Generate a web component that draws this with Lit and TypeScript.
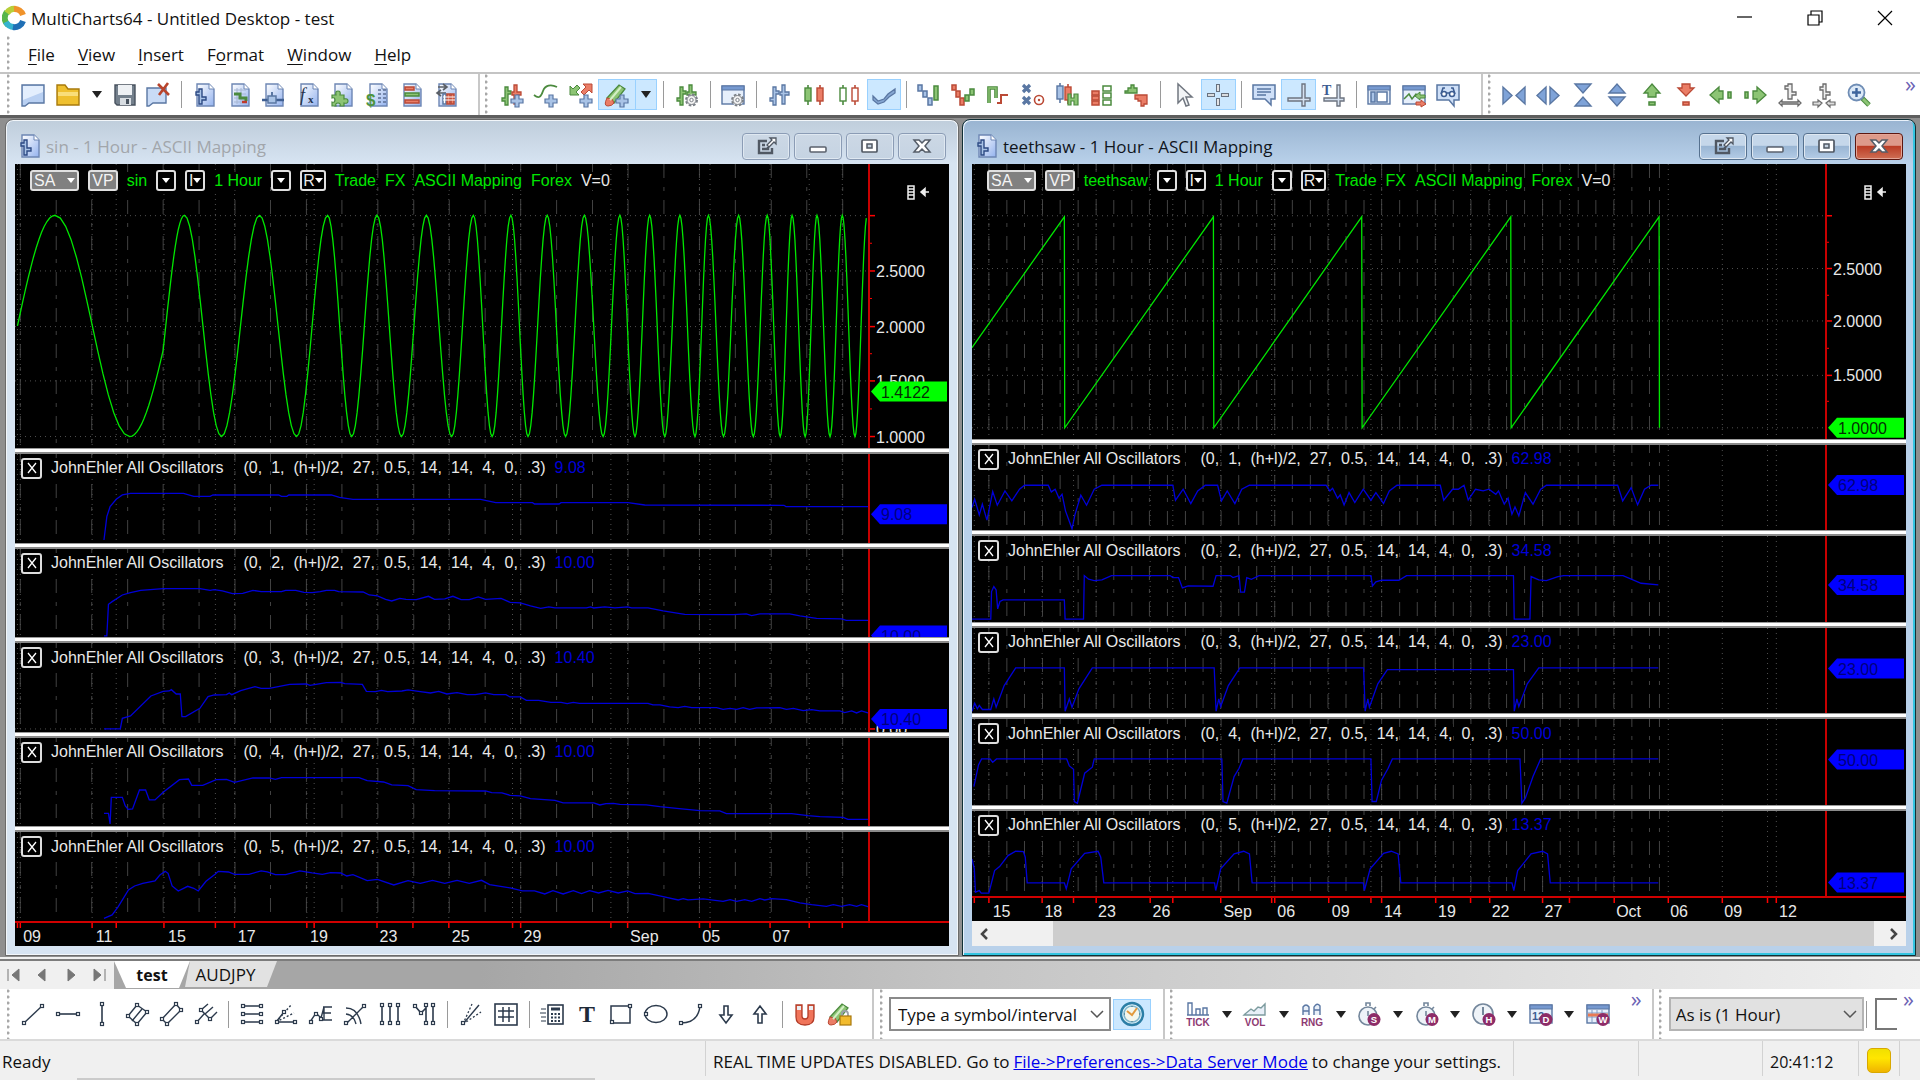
import { LitElement, html, svg, css, TemplateResult } from "lit";
import { customElement, property } from "lit/decorators.js";

type Glyph = TemplateResult;

/* ---------- icon drawing ---------- */
const BL = "#5a77a3", BF = "#a9c3e6", GR = "#4b8a3e", GF = "#8cc474", RD = "#bb4a36", RF = "#ea7d66", GY = "#6d7480", DK = "#2c3a4c";

const doc = (inner: unknown) => svg`
  <defs><linearGradient id="pg" x2="1" y2="1"><stop offset="0" stop-color="#fff"/><stop offset="1" stop-color="#93b2ee"/></linearGradient></defs>
  <path d="M4 1h12l5 5v17H4z" fill="url(#pg)" stroke="#6d86b4" stroke-width="1.4"/><path d="M16 1v5h5" fill="#fff" stroke="#6d86b4"/>${inner}`;
const plus = svg`<path d="M15 12h4v4h4v4h-4v4h-4v-4h-4v-4h4z" fill="${BF}" stroke="${BL}" stroke-width="1.2"/>`;
const gear = svg`<circle cx="16.500" cy="17" r="5.500" fill="#fff" stroke="#7b8087" stroke-width="2" stroke-dasharray="2.600 1.700"/><circle cx="16.500" cy="17" r="4.500" fill="#f2f2f2" stroke="#7b8087"/><circle cx="16.500" cy="17" r="1.700" fill="#fff" stroke="#7b8087"/>`;
const bars = (a: string, af: string, b: string, bf: string) => svg`
  <path d="M5 4h3v4h3v3H8v11H5v-4H2v-3h3z" fill="${af}" stroke="${a}" stroke-width="1.300"/>
  <path d="M14 2h3v7h4v3h-4v9h-3v-9h-2V9h2z" fill="${bf}" stroke="${b}" stroke-width="1.300"/>`;
const win = (inner: unknown) => svg`<rect x="1" y="3" width="22" height="18" fill="#e6effb" stroke="${BL}" stroke-width="1.400"/><rect x="1" y="3" width="22" height="4" fill="#7699d0" stroke="${BL}"/>${inner}`;
const candle = (x: number, c: string, f: string, y = 0) => svg`<path d="M${x} ${2 + y}v20" stroke="${c}" stroke-width="1.600"/><rect x="${x - 3}" y="${5 + y}" width="6" height="13" fill="${f}" stroke="${c}" stroke-width="1.400"/>`;
const box = (x: number, y: number, w: number, h: number, c: string, f = "#fff") => svg`<rect x="${x}" y="${y}" width="${w}" height="${h}" fill="${f}" stroke="${c}" stroke-width="1.500"/>`;
const node = (...p: number[][]) => p.map(([x, y]) => svg`<rect x="${x - 1.5}" y="${y - 1.5}" width="3" height="3" fill="#fff" stroke="${DK}" stroke-width="1.200"/>`);
const line = (d: string, w = 1.4, dash = "") => svg`<path d="${d}" fill="none" stroke="${DK}" stroke-width="${w}" stroke-dasharray="${dash}"/>`;
const badge = (t: string) => svg`<circle cx="17" cy="17.500" r="6.500" fill="#8d2c68"/><text x="17" y="21" text-anchor="middle" font-size="9.500" font-weight="700" fill="#fff" font-family="Liberation Sans, sans-serif">${t}</text>`;
const word = (t: string) => svg`<text x="12" y="24" text-anchor="middle" font-size="10" font-weight="700" fill="#8d3a72" font-family="Liberation Sans, sans-serif">${t}</text>`;
const watch = svg`<circle cx="11" cy="14" r="9" fill="#eef3f8" stroke="#74879c" stroke-width="1.600"/><path d="M9 4V1h4v3M17 7l2-2M11 9v5" fill="none" stroke="#74879c" stroke-width="1.600"/>`;
const pen = svg`<path d="M2 15 14 2l6 4L9 20z" fill="${GF}" stroke="${GR}" stroke-width="1.300"/><path d="M2 15q-4 8 1 8 4 0 6-3l-2-4z" fill="${RF}" stroke="${RD}"/><path d="M5 17 16 4" stroke="#d3efc5" stroke-width="2"/>`;

const icons: Record<string, Glyph> = {
  fresh: svg`<path d="M1 2h22v18H8l-4 3H1z" fill="#b9d0f2" stroke="${BL}" stroke-width="1.400"/><path d="M2 3h20v6L2 17z" fill="#eef5ff" opacity=".8"/>`,
  folder: svg`<path d="M1 2h8l3 4h11v16H1z" fill="#efc02f" stroke="#a87a0c" stroke-width="1.400"/><path d="M2 9h20v4H2z" fill="#f9de7a"/>`,
  save: svg`<path d="M2 2h20v20H4l-2-2z" fill="#74808c" stroke="#48525e" stroke-width="1.400"/><rect x="5" y="2" width="14" height="10" fill="#eef1f4"/><rect x="7" y="15" width="11" height="7" fill="#d8dde2"/><rect x="13" y="16" width="3" height="5" fill="#48525e"/>`,
  remove: svg`<path d="M1 5h19v15H7l-4 3H1z" fill="#c9dbf6" stroke="${BL}" stroke-width="1.400"/><path d="m12 1 11 11M22 0 13 12" stroke="#b8442c" stroke-width="2.600"/>`,
  docBars: doc(svg`<path d="M3 9h3V6h3v8h4v3H9v4H6v-9H3z" fill="${BF}" stroke="#2d4a84" stroke-width="1.400"/>`),
  docMap: doc(svg`<path d="M6 7h12M6 11h12M6 15h12M6 19h12M9 5v16M13 5v16" stroke="#a6b6d3"/><path d="M6 11h6v4h6v3" fill="none" stroke="${GR}" stroke-width="3"/><path d="M14 19h5" stroke="#c0392b" stroke-width="2.500"/>`),
  docLine: doc(svg`<path d="M0 17h22" stroke="#3f5f92" stroke-width="2.500"/>${box(6, 13, 8, 7, BL, BF)}<path d="M10 9v4" stroke="${BL}" stroke-width="2"/>`),
  docFx: doc(svg`<text x="3" y="18" font-size="18" font-style="italic" fill="#26344d" font-family="Liberation Serif, serif">f</text><text x="11" y="20" font-size="11" font-weight="700" fill="#26344d" font-family="Liberation Serif, serif">x</text>`),
  docPuzzle: doc(svg`<path d="M1 12h4q-1-4 2-4t2 4h4v4q4-1 4 2t-4 2v3H9q1-3-2-3t-2 3H1v-4q3 1 3-2T1 15z" fill="${GF}" stroke="${GR}" stroke-width="1.200"/>`),
  docMoney: doc(svg`<path d="M12 7h3M17 7h3M12 11h3M17 11h3M12 15h3M17 15h3M12 19h3M17 19h3" stroke="#5c6f94" stroke-width="1.600"/><text x="0" y="23" font-size="17" font-weight="700" fill="#4d9440" font-family="Liberation Sans, sans-serif">$</text>`),
  docRows: doc(svg`${box(5, 4, 9, 3, RD, RF)}${box(5, 10, 14, 3, GR, GF)}${box(5, 17, 14, 3, RD, RF)}`),
  docTable: doc(svg`<path d="M3 4h8M8 1l4 3-4 3M11 10H3M6 7l-4 3 4 3" fill="none" stroke="#5a5f66" stroke-width="1.600"/>${box(8, 11, 3, 10, BL)}${box(12, 11, 3, 10, RD, RF)}${box(16, 11, 3, 10, RD, RF)}<path d="M8 14h12M8 17h12" stroke="#fff"/>`),
  barsAdd: svg`${bars(GR, GF, RD, RF)}${plus}`,
  waveAdd: svg`<path d="M0 12c5 4 7 2 9-4s8-7 14-4" fill="none" stroke="${GR}" stroke-width="1.800"/>${plus}`,
  arrowsAdd: svg`<path d="M1 12h9l-3-3 4-4-3-3-4 4-3-3z" fill="${GF}" stroke="${GR}"/><path d="M23 1h-9l3 3-5 5 3 3 5-5 3 3z" fill="${RF}" stroke="${RD}"/>${plus}`,
  penAdd: svg`${pen}${plus}`,
  barsGear: svg`${bars(GR, GF, GR, GF)}${gear}`,
  winGear: svg`${win("")}${gear}`,
  ohlc: svg`${bars(BL, BF, BL, BF)}`,
  candles: svg`${candle(6, GR, GF)}${candle(18, RD, RF)}`,
  hollow: svg`${candle(6, GR, "#fff")}${candle(18, RD, "#fff")}`,
  lineType: svg`<path d="m1 13 5 5 6-2 4-5 7-5v4l-6 4-5 5-6 2-5-4z" fill="#86a7d2" stroke="${BL}" stroke-width="1.300"/>`,
  kagiA: svg`${box(1, 2, 4, 6, BL, BF)}${box(6, 8, 4, 6, BL, BF)}${box(11, 15, 4, 7, BL, BF)}${box(17, 3, 4, 14, GR, GF)}`,
  kagiB: svg`${box(1, 2, 4, 5, RD, RF)}${box(5, 8, 4, 6, RD, RF)}${box(9, 15, 4, 7, RD, RF)}${box(14, 12, 4, 6, GR, GF)}${box(19, 6, 4, 6, GR, GF)}`,
  kagiC: svg`<path d="M3 20V5h7v10" fill="none" stroke="${GR}" stroke-width="3.600"/><path d="M3 20V5h7v10" fill="none" stroke="${GF}" stroke-width="1.400"/><path d="M11 20h4v-8h7" fill="none" stroke="${RD}" stroke-width="2"/>`,
  pnf: svg`<path d="m2 2 7 7M9 2 2 9M2 14l7 7M9 14l-7 7" stroke="${BL}" stroke-width="3.200"/><circle cx="18" cy="17" r="4.500" fill="#fff" stroke="${RD}" stroke-width="1.600"/><circle cx="18" cy="17" r="1.200" fill="${RD}"/>`,
  heikin: svg`${candle(5, BL, BF, -2)}${candle(13, RD, RF, -1)}<path d="M13 11h3v4h3v-4h4v11h-4v-4h-3v4h-3z" fill="${GF}" stroke="${GR}" stroke-width="1.200"/>`,
  renko: svg`${box(2, 8, 7, 4, RD, RF)}${box(2, 13, 7, 4, RD, RF)}${box(2, 18, 7, 4, RD, RF)}${box(13, 3, 8, 5, GR)}${box(13, 10, 8, 5, GR)}${box(13, 17, 8, 5, GR)}`,
  profile: svg`<path d="M1 8h3V5h3V2h3v3h3v5H1z" fill="${GF}" stroke="${GR}" stroke-width="1.300"/><path d="M11 12h12v9h-3v2h-3v-5h-3v-2h-3z" fill="${RF}" stroke="${RD}" stroke-width="1.300"/>`,
  pointer: svg`<path d="M6 1v19l5-5 3 8 3-1-3-8h6z" fill="#f2f4f6" stroke="#717780" stroke-width="1.500"/>`,
  cross: svg`<path d="M12 1v8M12 15v8M1 12h8M15 12h8" stroke="#68717e" stroke-width="4"/><path d="M12 2v6M12 16v6M2 12h6M16 12h6" stroke="#fff" stroke-width="1.600"/>`,
  note: svg`<path d="M1 2h22v14h-4v6l-6-6H1z" fill="#cfe0f8" stroke="${BL}" stroke-width="1.500"/><path d="M5 6h14M5 9h14M5 12h9" stroke="${BL}" stroke-width="1.400"/>`,
  snap: svg`<path d="M15 1h3v14h5v3h-5v5h-3v-5H1v-3h14z" fill="#d5e1f0" stroke="${GY}" stroke-width="1.400"/>`,
  snapT: svg`<path d="M16 2h3v13h4v3h-4v5h-3v-5H3v-3h13z" fill="#d5e1f0" stroke="${GY}" stroke-width="1.400"/><text x="1" y="12" font-size="14" font-weight="700" fill="#3d5d92" font-family="Liberation Serif, serif">T</text>`,
  winPane: win(svg`${box(4, 9, 4, 10, BL, BF)}${box(10, 9, 10, 10, BL)}`),
  winWave: win(svg`<path d="m2 16 5-5 3 5 4-5 4 4" fill="none" stroke="${GR}" stroke-width="1.500"/><path d="M23 12h-5V9l-5 4 5 4v-2h5z" fill="${GF}" stroke="${GR}"/><path d="M14 19h5v-2l5 4-5 3v-2h-5z" fill="${RF}" stroke="${RD}"/>`),
  find: svg`<path d="M1 2h22v15h-5v6l-5-6H1z" fill="#cfe0f8" stroke="${BL}" stroke-width="1.500"/><path d="M9 5H7l-2 6M15 5h2l2 6M10 10h4" stroke="#3d5d92" stroke-width="1.600" fill="none"/><circle cx="8" cy="11" r="2.500" fill="#fff" stroke="#3d5d92" stroke-width="1.500"/><circle cx="16" cy="11" r="2.500" fill="#fff" stroke="#3d5d92" stroke-width="1.500"/>`,
  squeezeH: svg`<path d="M1 4v17l9-8.500zM23 4v17l-9-8.500z" fill="#7fa3d8" stroke="${BL}" stroke-width="1.400"/>`,
  expandH: svg`<path d="M10 4v17l-9-8.500zM14 4v17l9-8.500z" fill="#7fa3d8" stroke="${BL}" stroke-width="1.400"/>`,
  squeezeV: svg`<path d="M4 1h16l-8 9zM4 23h16l-8-9z" fill="#7fa3d8" stroke="${BL}" stroke-width="1.400"/>`,
  expandV: svg`<path d="M4 10h16l-8-9zM4 14h16l-8 9z" fill="#7fa3d8" stroke="${BL}" stroke-width="1.400"/>`,
  up: svg`<path d="m12 1 8 9h-4v4H8v-4H4z" fill="${GF}" stroke="${GR}" stroke-width="1.300"/>${box(9, 19, 6, 3, GR, GF)}`,
  down: svg`<path d="m12 13 8-8h-4V1H8v4H4z" fill="${RF}" stroke="${RD}" stroke-width="1.300"/>${box(9, 19, 6, 3, RD, RF)}`,
  left: svg`<path d="m1 12 9-8v4h4v8h-4v4z" fill="${GF}" stroke="${GR}" stroke-width="1.300"/>${box(19, 9, 3, 6, GR, GF)}`,
  right: svg`<path d="m23 12-9-8v4h-4v8h4v4z" fill="${GF}" stroke="${GR}" stroke-width="1.300"/>${box(2, 9, 3, 6, GR, GF)}`,
  spaceUp: svg`<path d="M10 1h4v8h4v3h-4v4h-4V6H7V3h3z" fill="#eee" stroke="#6b6b6b" stroke-width="1.300"/><path d="m1 20 3-3v2h16v-2l3 3-3 3v-2H4v2z" fill="#ddd" stroke="#6b6b6b" stroke-width="1.300"/>`,
  spaceDown: svg`<path d="M11 1h3v8h4v3h-4v4h-3V7H8V4h3z" fill="#eee" stroke="#6b6b6b" stroke-width="1.300"/><path d="m10 20-4-3v2H1v3h5v2zM14 20l4-3v2h5v3h-5v2z" fill="#ddd" stroke="#6b6b6b" stroke-width="1.200"/>`,
  zoom: svg`<path d="m15 15 7 7" stroke="${GR}" stroke-width="5"/><path d="m16 16 6 6" stroke="${GF}" stroke-width="3"/><circle cx="9.500" cy="9.500" r="8" fill="#dce9f7" stroke="#6f8db5" stroke-width="1.800"/><path d="M9.500 5v9M5 9.500h9" stroke="#3f659d" stroke-width="2.400"/>`,

  trend: svg`${line("M3 21 21 4")}${node([3, 21], [21, 4])}`,
  hline: svg`${line("M1 12h22", 1.6)}${node([2, 12], [22, 12])}`,
  vline: svg`${line("M12 2v21", 1.6)}${node([12, 2], [12, 22])}`,
  channel3: svg`${line("M3 14 12 3M7 19 17 7M12 22 22 10")}${line("m3 14 9 8M12 3l10 7")}${node([3, 14], [12, 3], [12, 22], [22, 10])}`,
  channel2: svg`${line("M3 17 17 2M8 22 22 8")}${line("m3 17 5 5M17 2l5 6")}${node([3, 17], [17, 2], [8, 22], [22, 8])}`,
  fork: svg`${line("M2 21 10 12M7 8l9 9M7 8l7-6M16 17l7-7M11 12l8-7")}${node([3, 20], [7, 8], [16, 17])}`,
  retrace: svg`${line("M3 4h18M3 12h18M3 20h18", 1.6)}${node([3, 4], [21, 4], [3, 12], [21, 12], [3, 20], [21, 20])}`,
  fan: svg`${line("M2 20h19M2 20l8-10")}${line("M2 20 20 11M2 20 18 2", 1.4, "2 2")}${node([3, 20], [10, 10], [21, 20])}`,
  extend: svg`${line("m1 20 6-9 5 5 3-11M14 5h9M14 11h8M14 18h9M15 5v13")}${node([2, 20], [7, 12], [12, 17])}`,
  arcs: svg`${line("M3 22 21 4M3 6q12 0 15 16M3 12q8 1 10 10")}${node([3, 21], [21, 4])}`,
  zones: svg`${line("M4 3v18M12 3v18M20 3v18", 1.6)}${node([4, 3], [4, 21], [12, 3], [12, 21], [20, 3], [20, 21])}`,
  zones2: svg`${line("M14 3v18M21 3v18M3 4l6 7 5-5", 1.6)}${node([3, 4], [14, 3], [21, 3], [9, 11], [14, 21], [21, 21])}`,
  rays: svg`${line("M4 22 20 3")}${line("M4 22 22 10M4 22 13 2", 1.3, "2 2")}${node([4, 21])}`,
  grid: svg`<rect x="1" y="2" width="22" height="21" fill="none" stroke="${DK}" stroke-width="1.600"/>${line("M9 5v15M15 5v15M4 9h16M4 15h16", 1.5)}`,
  calc: svg`<rect x="8" y="3" width="15" height="19" fill="#fff" stroke="${DK}" stroke-width="1.600"/><path d="M11 7h9" stroke="${DK}" stroke-width="3"/><path d="M11 12h9M11 15.500h9M11 19h9" stroke="${DK}" stroke-width="2" stroke-dasharray="2 1.500"/><path d="M1 7h5M0 11h6M1 15h5M1 19h5" stroke="${DK}"/>`,
  text: svg`<text x="12" y="20" text-anchor="middle" font-size="24" font-weight="700" fill="#1e2a38" font-family="Liberation Serif, serif">T</text>`,
  rect: svg`${line("M2 4h19v17H2z", 1.5)}${node([21, 4], [3, 20])}`,
  ellipse: svg`<ellipse cx="12" cy="12" rx="11" ry="8.500" fill="none" stroke="${DK}" stroke-width="1.500"/>${node([2, 12])}`,
  arc: svg`${line("M2 21Q19 21 21 4", 1.5)}${node([2, 21], [21, 4])}`,
  arrowDown: svg`<path d="M10 4h4v9h4l-6 8-6-8h4z" fill="#fff" stroke="${DK}" stroke-width="1.600"/>`,
  arrowUp: svg`<path d="M10 21h4v-9h4l-6-8-6 8h4z" fill="#fff" stroke="${DK}" stroke-width="1.600"/>`,
  magnet: svg`<path d="M3 3h6v11q0 3 3 3t3-3V3h6v12q0 8-9 8t-9-8z" fill="#f0745a" stroke="#b23c28" stroke-width="1.300"/><path d="M4 4h4v4H4zM16 4h4v4h-4z" fill="#e9edf2"/>`,
  penLock: svg`${pen}<path d="M14 15v-3q0-3 3-3t3 3v3" fill="none" stroke="#9aa0a8" stroke-width="1.800"/><rect x="12" y="14" width="11" height="9" fill="#f2bb2e" stroke="#a9780c" stroke-width="1.200"/>`,
  tick: svg`<path d="M2 13V1h4v12M10 13V7h4v6M17 13V6h4v7M1 13h22" fill="#fff" stroke="${BL}" stroke-width="1.400"/>${word("TICK")}`,
  vol: svg`<path d="m2 12 6-5 3 2 4-4 3 1 4-4v11H1z" fill="#e8eff8" stroke="#7c9b9e" stroke-width="1.400"/>${word("VOL")}`,
  rng: svg`<path d="M3 13V5q3-4 6 0v8M14 13V5q3-5 6-1v9M3 9h6M14 8h6" fill="#e8eff8" stroke="${BL}" stroke-width="1.400"/>${word("RNG")}`,
  sec: svg`${watch}${badge("S")}`,
  min: svg`${watch}${badge("M")}`,
  hour: svg`<circle cx="11" cy="12" r="10" fill="#eef3f8" stroke="#74879c" stroke-width="1.600"/><path d="M11 5v8" stroke="#74879c" stroke-width="2"/>${badge("H")}`,
  day: svg`${win(svg`<text x="3" y="18" font-size="11" font-weight="700" fill="#3d5d92" font-family="Liberation Sans, sans-serif">12</text>`)}${badge("D")}`,
  week: svg`${win(svg`<path d="M2 11h20M2 15h20M6 8v12M11 8v12M16 8v12" stroke="#7f9bc4"/><path d="M2 13h20" stroke="#e87a54" stroke-width="3"/>`)}${badge("W")}`,
  clock: svg`<circle cx="12" cy="12" r="11" fill="#dff1f8" stroke="#2b7ea6" stroke-width="2.400"/><circle cx="12" cy="12" r="8" fill="#f3f7ee" stroke="#7fb6cc" stroke-width="1.500"/><path d="m7 9 5 4 5-7" fill="none" stroke="#e29a3e" stroke-width="2"/><path d="M12 4v1M12 19v1M4 12h1M19 12h1" stroke="#37657a"/>`,
};
const icon = (name: string) => html`<svg class="ic" viewBox="0 0 24 24" aria-hidden="true">${icons[name]}</svg>`;

/* ---------- toolbar description: [kind, share of the row, names] ---------- */
type Cell = [kind: string, share: number, names?: string, on?: string];
const mainBar: Cell[] = [
  ["grip", 16], ["tools", 69, "fresh folder"], ["drop", 23], ["tools", 67, "save remove"], ["rule", 13],
  ["tools", 276, "docBars docMap docLine docFx docPuzzle docMoney docRows docTable"], ["gap", 12], ["edge", 6], ["grip", 12],
  ["tools", 104, "barsAdd waveAdd arrowsAdd"], ["split", 57, "penAdd"], ["rule", 13], ["tools", 34, "barsGear"], ["rule", 12],
  ["tools", 34, "winGear"], ["rule", 12], ["tools", 139, "ohlc candles hollow lineType", "lineType"], ["rule", 10],
  ["tools", 242, "kagiA kagiB kagiC pnf heikin renko profile"], ["rule", 13], ["tools", 69, "pointer cross", "cross"], ["rule", 11],
  ["tools", 104, "note snap snapT", "snap"], ["rule", 11], ["tools", 104, "winPane winWave find"], ["gap", 13], ["edge", 6], ["grip", 12],
  ["tools", 379, "squeezeH expandH squeezeV expandV up down left right spaceUp spaceDown zoom"], ["gap", 25], ["more", 19],
];
const drawBar: Cell[] = [
  ["grip", 16], ["tools", 207, "trend hline vline channel3 channel2 fork"], ["rule", 11],
  ["tools", 207, "retrace fan extend arcs zones zones2"], ["rule", 12], ["tools", 70, "rays grid"], ["rule", 11],
  ["tools", 243, "calc text rect ellipse arc arrowDown arrowUp"], ["rule", 10], ["tools", 70, "magnet penLock"], ["gap", 12], ["edge", 7], ["grip", 12],
  ["symbol", 222], ["gap", 2], ["tools", 38, "clock", "clock"], ["gap", 10], ["edge", 6], ["grip", 14],
  ["tools", 34, "tick"], ["drop", 23], ["tools", 34, "vol"], ["drop", 23], ["tools", 34, "rng"], ["drop", 23], ["tools", 34, "sec"], ["drop", 23],
  ["tools", 34, "min"], ["drop", 23], ["tools", 34, "hour"], ["drop", 23], ["tools", 34, "day"], ["drop", 23], ["tools", 34, "week"],
  ["gap", 11], ["more", 21], ["gap", 3], ["edge", 6], ["grip", 13], ["asis", 195], ["rule", 6], ["gap", 5], ["stub", 20], ["more", 23],
];

/* ---------- chart data, on each chart's own integer lattice ---------- */
interface Tag { y: number; text: string; color: string }
interface Pane { top: number; height: number; trace: string; color: string; value?: string; tag?: Tag; marks?: [number, string][]; rows?: number[] }
interface Chart { title: string; symbol: string; x0: number; width: number; dashes: number[]; dots: number[]; labels: [number, string][]; panes: Pane[]; active: boolean }

const sineTrace = () => {
  const nodes: [number, number][] = [[43, -0.5], [135, 0], [318, 1], [400, 1.43]];
  [452, 543, 636, 727, 803, 862, 924, 984, 1045, 1107, 1160, 1206, 1252, 1294, 1341, 1386, 1432, 1478, 1519, 1556, 1592, 1629, 1666, 1703, 1736, 1773, 1810, 1846, 1880, 1912, 1941, 1973, 2002, 2034, 2064, 2095, 2125]
    .forEach((x, i) => nodes.push([x, i + 2]));
  const out: string[] = [];
  for (let i = 0; i + 1 < nodes.length; i++) {
    const [xa, pa] = nodes[i], [xb, pb] = nodes[i + 1];
    for (let k = 0; k < 14; k++) {
      const t = k / 14;
      out.push(`${(xa + (xb - xa) * t).toFixed(1)},${(378 - 332 * Math.cos(Math.PI * (pa + (pb - pa) * t))).toFixed(1)}`);
    }
  }
  return out.join(" ");
};
const run = (from: number, step: number, n: number) => Array.from({ length: n }, (_, i) => Math.round(from + i * step));
const GREEN = "#00e600", BLUE = "#0000d8";

const sin: Chart = {
  title: "sin - 1 Hour - ASCII Mapping", symbol: "sin", x0: 37, width: 2090, active: false,
  dashes: run(50, 87.6, 24),
  dots: [43, 50, 226, 285, 402, 528, 575, 752, 770, 924, 1012, 1100, 1256, 1276, 1497, 1538, 1714, 1740, 1887, 1983, 2064],
  labels: [[57, "09"], [235, "11"], [412, "15"], [583, "17"], [760, "19"], [930, "23"], [1107, "25"], [1283, "29"], [1544, "Sep"], [1721, "05"], [1893, "07"]],
  panes: [
    { top: -108, height: 852, color: GREEN, trace: sineTrace(), rows: [47, 213, 380, 543, 710], marks: [[47, ""], [213, "2.5000"], [380, "2.0000"], [543, "1.5000"], [710, "1.0000"]], tag: { y: 575, text: "1.4122", color: "#0f0" } },
    { top: 762, height: 266, color: BLUE, value: "9.08", tag: { y: 943, text: "9.08", color: "#00f" },
      trace: "255,1020 262,950 270,920 285,898 300,885 320,880 450,880 475,889 515,889 522,885 683,885 690,889 703,889 708,885 812,885 832,892 865,898 1178,898 1215,908 1305,908 1310,912 1370,912 1375,908 1539,908 1580,915 1921,916 1926,920 2127,920" },
    { top: -36, height: 266, color: BLUE, value: "10.00", tag: { y: 224, text: "10.00", color: "#00f" },
      trace: "255,225 262,225 266,130 275,122 300,102 320,95 345,88 400,83 490,83 515,88 525,86 545,90 570,98 595,97 620,88 640,92 690,92 700,88 725,88 745,94 765,95 785,92 800,88 820,88 830,92 890,93 905,102 925,105 945,115 960,120 980,112 995,115 1020,116 1050,106 1065,115 1090,114 1110,106 1130,116 1150,116 1172,108 1190,115 1228,112 1250,124 1275,126 1300,135 1325,142 1345,138 1360,141 1437,141 1447,138 1455,141 1482,138 1507,141 1538,138 1548,141 1588,141 1625,150 1678,160 1797,161 1829,159 1842,164 1862,159 1935,159 1960,165 2001,172 2062,174 2074,178 2127,178" },
    { top: 249, height: 266, color: BLUE, value: "10.40", tag: { y: 477, text: "10.40", color: "#00f" }, rows: [507], marks: [[507, "0.00"]],
      trace: "255,507 295,507 300,475 320,468 370,408 400,394 415,393 420,389 432,402 442,402 446,470 455,470 490,445 510,410 525,405 555,404 562,399 568,404 590,392 625,380 640,385 660,385 710,373 750,372 760,376 800,368 835,367 845,371 888,373 898,394 920,395 935,391 950,395 985,393 1000,390 1030,395 1055,399 1075,394 1095,402 1120,398 1145,404 1165,404 1190,399 1210,404 1240,404 1250,411 1275,411 1290,421 1320,421 1350,427 1375,427 1390,431 1405,427 1420,430 1588,430 1600,435 1617,435 1641,441 1662,443 1678,439 1695,443 1756,443 1772,448 1789,445 1805,448 1821,443 1837,448 1854,444 1911,443 1927,448 1944,445 1968,452 1989,449 2009,453 2058,453 2070,458 2087,453 2099,459 2111,453 2127,459" },
    { top: 532, height: 266, color: BLUE, value: "10.00",
      trace: "255,758 266,758 270,790 273,710 300,710 307,735 314,746 325,745 342,688 357,688 366,718 380,718 400,695 440,657 462,655 470,674 497,674 530,657 555,656 575,665 620,652 660,652 675,656 690,651 880,651 900,660 940,664 960,673 1000,675 1020,687 1065,690 1190,691 1205,696 1230,697 1250,704 1275,706 1300,714 1360,719 1380,727 1455,727 1470,733 1485,729 1503,728 1519,731 1584,733 1617,738 1658,743 1715,750 1764,751 1780,759 1940,759 1980,765 2009,768 2066,770 2078,776 2127,776" },
    { top: 816, height: 266, color: BLUE, value: "10.00",
      trace: "255,1075 275,1065 290,1040 315,990 330,978 350,970 380,963 392,945 405,934 412,940 422,978 437,993 450,985 460,979 475,985 486,993 505,964 528,942 535,934 560,936 575,943 610,943 640,933 655,936 675,944 700,944 735,933 765,939 790,943 810,938 835,939 850,948 865,944 900,962 925,958 965,975 1000,962 1030,970 1060,961 1090,970 1120,961 1150,970 1180,961 1200,974 1250,984 1280,993 1310,993 1335,1002 1355,992 1380,1002 1405,992 1425,1001 1445,992 1467,999 1490,991 1515,999 1538,993 1556,1001 1588,1000 1625,1010 1662,1020 1674,1016 1686,1020 1723,1017 1772,1024 1789,1019 1805,1024 1825,1019 1842,1024 1862,1016 1874,1020 1891,1016 1927,1019 1960,1029 1989,1034 2025,1039 2042,1034 2062,1039 2082,1034 2099,1039 2111,1034 2127,1040" },
  ],
};

const saw: Chart = {
  title: "teethsaw - 1 Hour - ASCII Mapping", symbol: "teethsaw", x0: 31, width: 2226, active: true,
  dashes: [...run(75, 46.6, 38), 1825],
  dots: [37, 75, 214, 296, 355, 496, 555, 680, 813, 821, 962, 1072, 1100, 1241, 1332, 1382, 1520, 1590, 1707, 1848, 1989, 2107, 2130],
  labels: [[85, "15"], [220, "18"], [360, "23"], [502, "26"], [687, "Sep"], [828, "06"], [970, "09"], [1106, "14"], [1247, "19"], [1387, "22"], [1525, "27"], [1712, "Oct"], [1853, "06"], [1994, "09"], [2137, "12"]],
  panes: [
    { top: 12, height: 822, color: GREEN, rows: [167, 325, 482, 645, 802], marks: [[167, ""], [325, "2.5000"], [482, "2.0000"], [645, "1.5000"]], tag: { y: 802, text: "1.0000", color: "#0f0" },
      trace: "31,562 272,170 273,802 661,170 662,802 1048,170 1049,802 1437,170 1438,802 1824,170 1825,802" },
    { top: 852, height: 257, color: BLUE, value: "62.98", tag: { y: 972, text: "62.98", color: "#00f" },
      trace: "31,1040 38,1015 50,1062 58,1030 70,1078 85,992 97,1033 117,990 135,1020 155,985 168,973 230,973 238,993 248,985 258,1012 266,1000 275,1050 292,1104 300,1060 315,1003 330,1033 350,985 370,973 555,973 562,1018 582,985 602,1028 620,990 640,973 672,973 682,1020 697,990 717,1028 735,985 755,973 955,973 965,990 972,982 985,1012 992,1002 1002,1032 1015,995 1030,1025 1052,985 1072,1018 1085,995 1105,1028 1120,990 1140,973 1253,973 1262,1018 1285,985 1300,985 1315,973 1326,1017 1345,985 1365,990 1380,985 1398,1000 1405,990 1420,1030 1430,1012 1440,1060 1448,1038 1458,1065 1475,995 1495,1030 1515,985 1530,973 1716,973 1729,1020 1751,980 1768,1032 1786,985 1803,973 1822,973" },
    { top: -72, height: 257, color: BLUE, value: "34.58", tag: { y: 75, text: "34.58", color: "#00f" },
      trace: "31,178 80,178 82,95 88,80 94,90 98,147 104,125 112,120 272,120 274,178 322,178 324,47 335,58 350,62 370,60 395,47 548,47 555,53 570,53 580,84 595,78 660,79 668,47 705,47 712,53 728,47 732,97 742,97 748,53 760,58 780,47 1072,47 1076,78 1085,66 1100,61 1145,61 1165,47 1444,47 1446,178 1487,178 1490,50 1510,60 1530,62 1560,50 1575,47 1730,47 1777,70 1822,75" },
    { top: 202, height: 257, color: BLUE, value: "23.00", tag: { y: 324, text: "23.00", color: "#00f" },
      trace: "31,452 38,428 45,445 50,435 58,447 80,447 88,415 94,440 115,375 145,322 272,322 274,452 285,415 292,440 310,385 345,322 663,322 668,452 675,415 680,438 700,375 730,322 1053,322 1057,452 1064,415 1068,440 1090,370 1115,327 1444,327 1446,452 1453,415 1458,438 1480,370 1510,322 1822,322" },
    { top: 477, height: 257, color: BLUE, value: "50.00", tag: { y: 599, text: "50.00", color: "#00f" },
      trace: "36,680 48,615 56,597 78,597 85,607 95,597 278,597 285,618 296,628 298,725 306,730 325,640 345,622 350,597 683,597 686,725 696,730 715,650 728,625 738,597 1072,597 1075,725 1086,725 1100,660 1117,625 1128,597 1461,597 1466,730 1475,715 1495,650 1515,597 1822,597" },
    { top: 751, height: 257, color: BLUE, value: "13.37", tag: { y: 966, text: "13.37", color: "#00f" },
      trace: "31,895 37,925 40,995 50,990 55,998 75,998 90,930 103,918 125,885 145,872 165,873 170,890 175,967 272,967 277,985 290,925 325,878 360,872 367,890 375,967 664,967 667,990 680,925 715,880 740,872 755,880 762,967 1052,967 1055,990 1070,925 1105,878 1125,872 1143,880 1150,967 1440,967 1445,990 1455,930 1490,880 1520,872 1533,880 1540,967 1822,967" },
  ],
};

/* ---------- one MDI chart window ---------- */
@customElement("chart-window")
export class ChartWindow extends LitElement {
  @property({ attribute: false }) chart!: Chart;

  static styles = css`
    :host { display: flex; flex: 1 1 0; min-width: 0; }
    button { font: inherit; padding: 0; margin: 0; cursor: default; }
    .frame { flex: 1; min-width: 0; display: flex; flex-direction: column; padding: 0 9px 9px 9px; border: 1px solid #6b6b6b; border-radius: 8px 8px 0 0;
      background: linear-gradient(#bfcddb, #d7e4f2 44px); box-shadow: inset 0 0 0 1px #f2f6fa; }
    .frame.active { border-color: #123036; background: linear-gradient(#99b4d1, #b9d1ea 44px); box-shadow: inset 1px 1px 0 #e8f1fa, inset -2px -2px 0 #33c4e0; }
    .title { display: flex; align-items: center; gap: 4px; height: 44px; box-sizing: border-box; padding: 8px 3px 0 5px; color: #a2a6ab; }
    .active .title { color: #10151c; }
    .title h2 { flex: 1; margin: 0; font-size: 17px; font-weight: 400; white-space: nowrap; }
    .ic { width: 24px; height: 24px; flex: none; margin-left: -2px; }
    .cap { width: 48px; height: 27px; box-sizing: border-box; border: 1px solid #8b9cb5; border-radius: 4px; background: linear-gradient(#ccd8e5, #c5d3e2); box-shadow: inset 0 0 0 1px #dfe8f1; display: grid; place-items: center; }
    .active .cap { border-color: #56718f; background: linear-gradient(#c5d7ea 45%, #9ab6d4 50%, #b4cce6); }
    .active .cap.close { border-color: #5c1710; background: linear-gradient(#dd9a8a 45%, #bb3d25 50%, #cf6f55); box-shadow: inset 0 0 0 1px #e4a596; }
    .client { flex: 1; min-height: 0; display: flex; flex-direction: column; background: #000; color: #e8e8e8; font-family: "Liberation Sans", Arial, sans-serif; font-size: 16px; }
    .pane { flex: 1 1 0; min-height: 0; display: flex; flex-direction: column; }
    .pane.main { flex-grow: 3; }
    .split { height: 6px; flex: none; background: linear-gradient(#9a9a9a 1px, #fff 1px 4px, #8a8a8a 4px); }
    .body { flex: 1; min-height: 0; display: grid; grid-template-columns: minmax(0, 1fr) 81px; grid-template-rows: minmax(0, 1fr); }
    .plot { grid-area: 1 / 1; width: 100%; height: 100%; display: block; }
    .plot * { vector-effect: non-scaling-stroke; fill: none; }
    .dash { stroke: #424242; stroke-dasharray: 14 9 4 9; }
    .dot { stroke: #505050; stroke-dasharray: 1 4; }
    .scale { grid-area: 1 / 2; width: 100%; height: 100%; box-sizing: border-box; border-left: 2px solid #c80000; display: block; font-size: 16px; overflow: hidden; }
    .legend { grid-area: 1 / 1 / 2 / 3; align-self: start; justify-self: start; display: flex; align-items: center; gap: 9px; margin: 4px 0 0 6px; line-height: 20px; white-space: pre; z-index: 1; }
    .legend span { background: #000; }
    .legend .name { margin-right: 11px; }
    .legend .value { color: #0000d8; }
    .x { width: 21px; height: 21px; border: 2px solid #ddd; border-radius: 3px; background: #000; display: grid; place-items: center; }
    .status { grid-area: 1 / 1 / 2 / 3; align-self: start; justify-self: start; display: flex; align-items: center; gap: 9px; margin: 6px 0 0 15px; line-height: 18px; white-space: nowrap; color: #00e600; z-index: 1; }
    .status span { background: #000; }
    .status .v { color: #e8e8e8; }
    .chip { height: 21px; box-sizing: border-box; border: 2px solid #e0e0e0; border-radius: 3px; background: #000; color: #e8e8e8; display: flex; align-items: center; justify-content: center; min-width: 20px; padding: 0 1px; }
    .chip.solid { background: #808080; color: #f4f4f4; padding: 0 2px; }
    .chip i { border: 4px solid transparent; border-top: 5px solid #fff; border-bottom: 0; }
    .chip.solid i { padding: 0; margin-left: 12px; }
    .time { height: 25px; flex: none; border-top: 2px solid #d00000; box-sizing: border-box; padding-right: 81px; }
    .time svg { width: 100%; height: 100%; display: block; overflow: visible; font-size: 16px; }
    .scroll { height: 25px; flex: none; display: flex; align-items: stretch; background: #f0f0f0; }
    .scroll button { border: 0; background: none; width: 24px; display: grid; place-items: center; }
    .scroll .lead { flex: 57; }
    .scroll .thumb { flex: 820; background: #cdcdcd; }
    .scroll .tail { flex: 8; }
  `;

  private pct(v: number, a: number, len: number) { return `${(((v - a) / len) * 100).toFixed(2)}%`; }

  private plot(p: Pane, main: boolean) {
    const c = this.chart, b = p.top + p.height, off = main ? 0 : 6, end = c.x0 + c.width;
    return html`<svg class="plot" viewBox="${c.x0} ${p.top} ${c.width} ${p.height}" preserveAspectRatio="none" role="img" aria-label="Plot">
      ${c.dashes.map((x) => svg`<path class="dash" stroke-dashoffset="${off}" d="M${x} ${p.top}V${b}"/>`)}
      ${c.dots.map((x) => svg`<path class="dot" d="M${x} ${p.top}V${b}"/>`)}
      ${(p.rows ?? []).map((y) => svg`<path class="dot" d="M${c.x0} ${y}H${end}"/>`)}
      <polyline points="${p.trace}" stroke="${p.color}" stroke-width="1.3"></polyline>
    </svg>`;
  }

  private scale(p: Pane, main: boolean) {
    const marks = p.marks ?? [];
    const step = main ? (p.rows![4] - p.rows![0]) / 8 : 0;
    return html`<svg class="scale">
      ${marks.map(([y, t]) => svg`<svg y="${this.pct(y, p.top, p.height)}" overflow="visible"><path d="M0 0h5" stroke="#f00" stroke-width="1.500"/><text x="6" y="6" fill="#e8e8e8">${t}</text></svg>`)}
      ${main ? [1, 3, 5, 7].map((i) => svg`<svg y="${this.pct(marks[0][0] + step * i, p.top, p.height)}" overflow="visible"><path d="M0 0h2" stroke="#f00"/></svg>`) : ""}
      ${main ? svg`<path d="M38 22h6v13h-6zM38 25h6M38 28h6M38 31h6" fill="none" stroke="#eee" stroke-width="1.500"/><path d="M59 28h-7M55 24.500 51 28l4 3.500z" fill="#eee" stroke="#eee" stroke-width="1.500"/>` : ""}
      ${p.tag ? svg`<svg y="${this.pct(p.tag.y, p.top, p.height)}" overflow="visible"><path d="M1 0 10-10H77V10H10z" fill="${p.tag.color}"/><text x="11" y="6" fill="${p.tag.color === "#0f0" ? "#053005" : "#00007c"}">${p.tag.text}</text></svg>` : ""}
    </svg>`;
  }

  private statusLine() {
    const tri = html`<i></i>`;
    return html`<div class="status">
      <button class="chip solid">SA${tri}</button><button class="chip solid">VP</button><span>${this.chart.symbol}</span>
      <button class="chip" aria-label="Symbols">${tri}</button><button class="chip">I${tri}</button><span>1 Hour</span>
      <button class="chip" aria-label="Resolutions">${tri}</button><button class="chip">R${tri}</button>
      <span>Trade</span><span>FX</span><span>ASCII Mapping</span><span>Forex</span><span class="v">V=0</span></div>`;
  }

  private legend(n: number, value: string) {
    return html`<div class="legend"><button class="x" aria-label="Remove study"><svg width="12" height="12" viewBox="0 0 12 12"><path d="m2 1 8 10M10 1 2 11" stroke="#fff" stroke-width="1.3"/></svg></button><span class="name">JohnEhler All Oscillators</span>
      ${["(0,", `${n},`, "(h+l)/2,", "27,", "0.5,", "14,", "14,", "4,", "0,", ".3)"].map((t) => html`<span>${t}</span>`)}<span class="value">${value}</span></div>`;
  }

  render() {
    const c = this.chart;
    const s = (d: unknown, w = 26) => html`<svg width="${w}" height="20" viewBox="0 0 26 20">${d}</svg>`;
    return html`<section class="frame ${c.active ? "active" : ""}">
      <header class="title">${icon("docBars")}<h2>${c.title}</h2>
        <button class="cap" aria-label="Detach">${s(svg`<path d="M14 5H6v12h13v-5M9 9h3M9 13h6v-2" fill="none" stroke="#505863" stroke-width="2.400"/><path d="M17 2h6v6l-2-2-5 5-2-2 5-5z" fill="#fff" stroke="#505863" stroke-width="1.300"/>`)}</button>
        <button class="cap" aria-label="Minimize">${s(svg`<rect x="5" y="11" width="16" height="5" rx="1" fill="#fff" stroke="#5b626d" stroke-width="1.600"/>`)}</button>
        <button class="cap" aria-label="Maximize">${s(svg`<rect x="5" y="4" width="15" height="12" rx="1" fill="#fff" stroke="#505863" stroke-width="1.700"/><rect x="10" y="8" width="5" height="4" fill="#c7d3e0" stroke="#505863" stroke-width="1.500"/>`)}</button>
        <button class="cap close" aria-label="Close">${s(svg`<path d="M5 4h5l3 3 3-3h5l-5 6 5 6h-5l-3-3-3 3H5l5-6z" fill="#fff" stroke="#555d68" stroke-width="1.500"/>`)}</button>
      </header>
      <div class="client">
        ${c.panes.map((p, i) => html`<div class="pane ${i ? "" : "main"}">${i ? html`<div class="split"></div>` : ""}
          <div class="body">${this.plot(p, !i)}${this.scale(p, !i)}${i ? this.legend(i, p.value!) : this.statusLine()}</div></div>`)}
        <div class="time"><svg>
          ${c.dots.map((x) => svg`<svg x="${this.pct(x, c.x0, c.width)}" overflow="visible"><path d="M0 0v5" stroke="#f00" stroke-width="1.500"/></svg>`)}
          ${c.labels.map(([x, t]) => svg`<text x="${this.pct(x, c.x0, c.width)}" y="19" fill="#e8e8e8">${t}</text>`)}</svg></div>
        ${c.active ? html`<div class="scroll"><button aria-label="Scroll left"><svg width="12" height="12"><path d="M9 1 4 6l5 5" fill="none" stroke="#444" stroke-width="2.500"/></svg></button><div class="lead"></div><div class="thumb"></div><div class="tail"></div><button aria-label="Scroll right"><svg width="12" height="12"><path d="m3 1 5 5-5 5" fill="none" stroke="#444" stroke-width="2.500"/></svg></button></div>` : ""}
      </div></section>`;
  }
}

/* ---------- application shell ---------- */
@customElement("app-root")
export class AppRoot extends LitElement {
  static styles = css`
    :host { display: flex; flex-direction: column; height: 100vh; min-height: 700px; overflow: hidden; background: #fff; color: #111;
      font-family: "Open Sans", "Noto Sans", sans-serif; font-size: 17px; }
    button { font: inherit; color: inherit; padding: 0; margin: 0; border: 0; background: none; cursor: default; display: grid; place-items: center; }
    .caption { display: flex; align-items: center; height: 36px; flex: none; padding: 0 0 0 2px; }
    .caption h1 { flex: 1; margin: 0 0 0 5px; font-size: 17px; font-weight: 400; }
    .caption button { width: 70px; height: 34px; }
    .menu { display: flex; align-items: center; height: 36px; flex: none; border-bottom: 2px solid #c4c4c4; }
    .menu button { margin-right: 23px; display: block; }
    .menu u { text-underline-offset: 3px; }
    .grip { align-self: stretch; background: radial-gradient(circle at 1px 2px, #a8a8a8 1px, transparent 2px) 7px 0 / 4px 6px repeat-y; }
    .edge + .grip { background-position: 3px 0; }
    .bar { display: flex; align-items: stretch; flex: none; }
    .bar.main { height: 41px; border-bottom: 3px solid #5e5e5e; }
    .bar.draw { height: 50px; border-bottom: 2px solid #dadada; }
    .bar > * { min-width: 0; }
    .tools { display: flex; align-items: center; }
    .tools button { flex: 1 1 0; min-width: 0; height: 31px; box-sizing: border-box; border: 1px solid transparent; }
    .tools .on, .splitbtn { background: #cce8ff; border: 1px solid #99d1ff; }
    .splitbtn { display: flex; align-self: center; height: 31px; box-sizing: border-box; }
    .splitbtn button { flex: 35; }
    .splitbtn button + button { flex: 20; border-left: 1px solid #99d1ff; }
    .ic { width: 24px; height: 24px; display: block; overflow: visible; }
    .tri { width: 0; height: 0; border: 5px solid transparent; border-top: 7px solid #222; border-bottom: 0; }
    .rule, .edge { display: flex; justify-content: center; align-items: center; }
    .rule::after { content: ""; width: 1px; height: 27px; background: #9a9a9a; }
    .edge::after { content: ""; width: 2px; align-self: stretch; background: #c8c8c8; }
    .more { color: #6b62b4; font-size: 22px; line-height: 18px; align-self: flex-start; }
    .pick { align-self: center; height: 34px; display: flex; }
    select { appearance: none; flex: 1; min-width: 0; font: inherit; color: #111; border: 2px solid #8a8a8a; border-radius: 0; padding: 0 26px 0 7px;
      background: #fff url("data:image/svg+xml,%3Csvg xmlns='http://www.w3.org/2000/svg' width='14' height='10'%3E%3Cpath d='M1 2l6 6 6-6' fill='none' stroke='%23555' stroke-width='1.500'/%3E%3C/svg%3E") right 5px center no-repeat; }
    .asis select { background-color: #e1e1e1; border-color: #b4b4b4; padding-left: 5px; }
    .stub { align-self: center; height: 32px; box-sizing: border-box; border: 2px solid #777; border-right: 0; }
    .mdi { flex: 1; min-height: 0; display: flex; gap: 3px; padding: 1px 4px 1px 5px; background: #8f8f8f; }
    .lip { height: 4px; flex: none; background: #f0f0f0; border-bottom: 2px solid #7c7c7c; box-sizing: border-box; }
    .tabs { display: flex; height: 28px; flex: none; background: linear-gradient(90deg, #a6a6a6 0 25%, #c4c4c4 50%, #f0f0f0); }
    .nav { display: flex; align-items: center; background: #f0f0f0; width: 114px; justify-content: space-around; }
    .tab { clip-path: polygon(0 0, 100% 0, calc(100% - 11px) 100%, 12px 100%); background: #fff; width: 76px; font-weight: 700; font-size: 16px; height: 27px; }
    .tab.other { width: 92px; margin-left: -5px; padding-right: 11px; height: 26px; font-weight: 400; font-size: 17px; background: #e2e2e2; clip-path: polygon(5px 0, 100% 0, calc(100% - 10px) 100%, 0 100%); }
    .foot { display: grid; grid-template-columns: 706fr 808fr 125fr 124fr 96fr 41fr 20fr; height: 37px; flex: none; background: #f0f0f0; white-space: nowrap; }
    .foot > * { height: 35px; display: flex; align-items: center; box-sizing: border-box; padding: 6px 0 0 7px; border-right: 1px solid #d2d2d2; min-width: 0; }
    .foot .ready { padding-left: 2px; }
    .foot .msg { gap: 4px; }
    .foot a { color: #00e; }
    .foot .clock { font-size: 16px; }
    .foot .lamp { padding: 3px 0 0; justify-content: center; }
    .foot .end { border: 0; }
    .lamp i { width: 24px; height: 25px; border-radius: 5px; box-sizing: border-box; border: 1px solid #d9a800; background: linear-gradient(#f0e000, #ffe600 40%, #f0b400); }
    .under { display: flex; height: 2px; flex: none; background: #f0f0f0; }
    .under i { margin-left: 4%; width: 27%; background: #cbcbcb; }
  `;

  private cell([kind, share, names = "", on = ""]: Cell) {
    const st = `flex:${share} 1 0px`;
    switch (kind) {
      case "tools": return html`<div class="tools" style=${st}>${names.split(" ").map((n) => html`<button class=${n === on ? "on" : ""} aria-label=${n}>${icon(n)}</button>`)}</div>`;
      case "drop": return html`<button style=${st} aria-label="More choices"><span class="tri"></span></button>`;
      case "split": return html`<div class="splitbtn" style=${st}><button aria-label=${names}>${icon(names)}</button><button aria-label="Drawing choices"><span class="tri"></span></button></div>`;
      case "more": return html`<button class="more" style=${st} aria-label="More buttons">»</button>`;
      case "symbol": return html`<div class="pick" style=${st}><select aria-label="Symbol or interval"><option>Type a symbol/interval</option></select></div>`;
      case "asis": return html`<div class="pick asis" style=${st}><select aria-label="Resolution"><option>As is (1 Hour)</option></select></div>`;
      default: return html`<div class=${kind} style=${st}></div>`;
    }
  }

  render() {
    const menu: [string, string, string][] = [["", "F", "ile"], ["", "V", "iew"], ["", "I", "nsert"], ["F", "o", "rmat"], ["", "W", "indow"], ["", "H", "elp"]];
    const nav = ["M2 3v12M13 3v12L6 9z", "M11 3v12L4 9z", "M5 3v12l7-6z", "M14 3v12M3 3v12l7-6z"];
    return html`
      <header class="caption">
        <svg width="24" height="26" viewBox="0 0 24 26" aria-hidden="true"><g fill="none" stroke-width="6"><path d="M6 20A9 9 0 0 1 5 7" stroke="#56b54b"/><path d="M5 8a9 9 0 0 1 9-4" stroke="#b7cf3a"/><path d="M12 4a9 9 0 0 1 9 6" stroke="#f0932b"/><path d="M4 17a9 9 0 0 0 8 5" stroke="#35b3cf"/><path d="M11 22a9 9 0 0 0 10-6" stroke="#1f6fb5"/></g></svg>
        <h1>MultiCharts64 - Untitled Desktop - test</h1>
        <button aria-label="Minimize"><svg width="16" height="16"><path d="M0 7h15" stroke="#000" stroke-width="1.200"/></svg></button>
        <button aria-label="Restore"><svg width="16" height="16"><path d="M1 5h11v10H1zM4 5V1h11v11h-3" fill="none" stroke="#000" stroke-width="1.200"/></svg></button>
        <button aria-label="Close"><svg width="16" height="16"><path d="m1 1 14 14M15 1 1 15" stroke="#000" stroke-width="1.200"/></svg></button>
      </header>
      <nav class="menu"><span class="grip" style="width:28px"></span>${menu.map(([a, u, b]) => html`<button>${a}<u>${u}</u>${b}</button>`)}</nav>
      <div class="bar main">${mainBar.map((c) => this.cell(c))}</div>
      <main class="mdi"><chart-window .chart=${sin}></chart-window><chart-window .chart=${saw}></chart-window></main>
      <div class="lip"></div>
      <div class="tabs"><div class="nav">${nav.map((d) => html`<button aria-label="Tab scroll"><svg width="17" height="18"><path d=${d} fill="#777" stroke="#777"/></svg></button>`)}</div>
        <button class="tab">test</button><button class="tab other">AUDJPY</button></div>
      <div class="bar draw">${drawBar.map((c) => this.cell(c))}</div>
      <footer class="foot"><div class="ready">Ready</div>
        <div class="msg"><span>REAL TIME UPDATES DISABLED. Go to</span><a href="#preferences">File-&gt;Preferences-&gt;Data Server Mode</a><span>to change your settings.</span></div>
        <div class="s1"></div><div class="s2"></div><div class="clock">20:41:12</div><div class="lamp"><i></i></div><div class="end"></div></footer>
      <div class="under"><i></i></div>`;
  }
}
